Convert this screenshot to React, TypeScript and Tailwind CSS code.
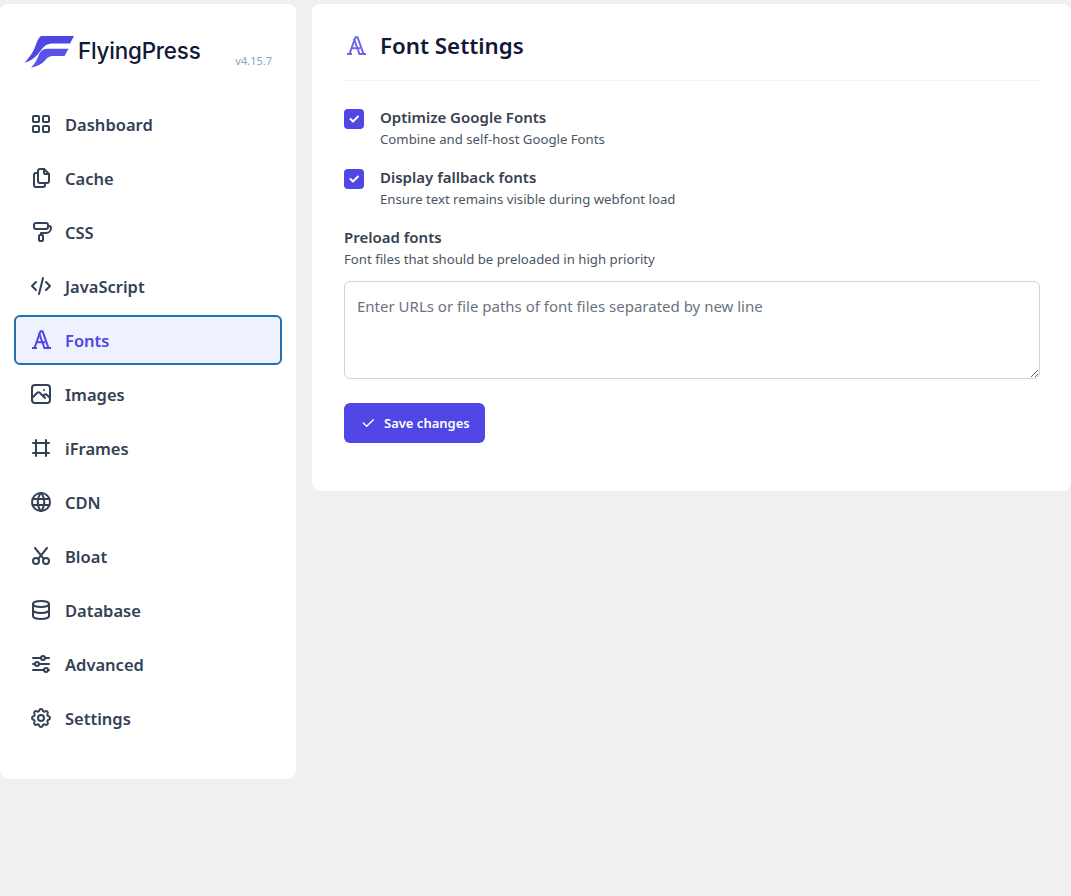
import React from 'react';
import {
  TbLayoutGrid,
  TbFiles,
  TbPaint,
  TbCode,
  TbPhoto,
  TbFrame,
  TbWorld,
  TbCut,
  TbDatabase,
  TbAdjustmentsHorizontal,
  TbSettings,
  TbCheck,
} from 'react-icons/tb';

const FontIcon = ({ className }: { className?: string }) => (
  <svg viewBox="0 0 24 24" fill="none" stroke="currentColor" strokeWidth="2" strokeLinejoin="round" className={className}>
    <path d="M3 20h5M14.5 20h7.500" />
    <path d="M5.500 20 11.500 3.200h2L19.500 20" />
    <path d="M15.500 20 10 5" />
    <path d="M7.500 14.200h9" />
  </svg>
);

const Logo = () => (
  <svg viewBox="0 0 50 32" className="h-8 w-[50px]" fill="#4f46e5">
    <path d="M17 0h33l-4 7.500H30c-6 0-9 1.500-12.500 6C14 18 11 23.500 .5 26.800 7 20 10 14 12 8.500 13.500 4 15 1.500 17 0Z" />
    <path d="M23 12.800h21.500l-4 7.300H30c-5 0-6.500 1.500-9 4.500C18 28.500 13 30.500 7 31.800c4-4 6-8 7.500-12 1.500-4 4-7 8.500-7Z" fill="#5b52ea" />
  </svg>
);

const navItems = [
  { label: 'Dashboard', icon: TbLayoutGrid },
  { label: 'Cache', icon: TbFiles },
  { label: 'CSS', icon: TbPaint },
  { label: 'JavaScript', icon: TbCode },
  { label: 'Fonts', icon: FontIcon, active: true },
  { label: 'Images', icon: TbPhoto },
  { label: 'iFrames', icon: TbFrame },
  { label: 'CDN', icon: TbWorld },
  { label: 'Bloat', icon: TbCut },
  { label: 'Database', icon: TbDatabase },
  { label: 'Advanced', icon: TbAdjustmentsHorizontal },
  { label: 'Settings', icon: TbSettings },
];

const CheckOption = ({ title, text }: { title: string; text: string }) => (
  <div className="flex gap-4">
    <span className="mt-[2px] flex h-5 w-5 shrink-0 items-center justify-center rounded-[4px] bg-[#4f46e5] text-white">
      <TbCheck className="h-3 w-3" strokeWidth={4} />
    </span>
    <div>
      <div className="text-[15px] leading-5 font-semibold text-[#374151]">{title}</div>
      <div className="mt-[2px] text-[13.2px] leading-[20px] text-[#4b5563]">{text}</div>
    </div>
  </div>
);

export default function App() {
  return (
    <div className="flex min-h-[896px] items-start gap-4 bg-[#f0f0f1] pt-1 font-['Noto_Sans',sans-serif]">
      <aside className="w-[296px] shrink-0 rounded-lg bg-white px-[14px] pt-8 pb-9">
        <div className="flex items-start px-[10px]">
          <Logo />
          <span className="ml-[4px] font-['Inter',sans-serif] text-[22.4px] leading-[30px] font-medium tracking-[-0.2px] text-[#141836]">FlyingPress</span>
          <span className="mt-[17px] ml-auto text-[11px] leading-[16px] text-[#8ba6bd]">v4.15.7</span>
        </div>
        <nav className="mt-[30px] flex flex-col gap-1">
          {navItems.map(({ label, icon: Icon, active }) => (
            <a
              key={label}
              className={`flex h-[50px] items-center gap-3 rounded-md border-2 px-[13px] text-[16.5px] font-semibold ${
                active ? 'border-[#2271b1] bg-[#eef2ff] text-[#4f46e5]' : 'border-transparent text-[#334155]'
              }`}
            >
              <Icon className="h-6 w-6 shrink-0" />
              <span className="pt-[2px]">{label}</span>
            </a>
          ))}
        </nav>
      </aside>
      <main className="flex-1 rounded-lg bg-white pt-[24px] pr-[31px] pb-12 pl-8">
        <div className="flex items-center gap-3 border-b border-[#f3f4f6] pb-[16px]">
          <FontIcon className="h-6 w-6 text-[#6f66ea]" />
          <h1 className="text-[22.3px] leading-9 font-semibold text-[#141836]">Font Settings</h1>
        </div>
        <div className="mt-[26px] flex flex-col gap-[18px]">
          <CheckOption title="Optimize Google Fonts" text="Combine and self-host Google Fonts" />
          <CheckOption title="Display fallback fonts" text="Ensure text remains visible during webfont load" />
        </div>
        <div className="mt-[18px] text-[15px] leading-5 font-semibold text-[#374151]">Preload fonts</div>
        <div className="mt-[2px] text-[13.2px] leading-[20px] text-[#4b5563]">Font files that should be preloaded in high priority</div>
        <textarea
          rows={4}
          placeholder="Enter URLs or file paths of font files separated by new line"
          className="mt-[12px] block h-[98px] w-full rounded-md border border-[#c8d3e6] bg-white px-3 py-[14px] text-[15px] leading-5 text-[#374151] placeholder:text-[#6b7280]"
        />
        <button className="mt-6 flex h-10 items-center gap-2 rounded-md bg-[#4f46e5] pr-[15px] pl-4 text-[13px] font-semibold text-white">
          <TbCheck className="h-4 w-4" />
          <span className="pt-[2px]">Save changes</span>
        </button>
      </main>
    </div>
  );
}
